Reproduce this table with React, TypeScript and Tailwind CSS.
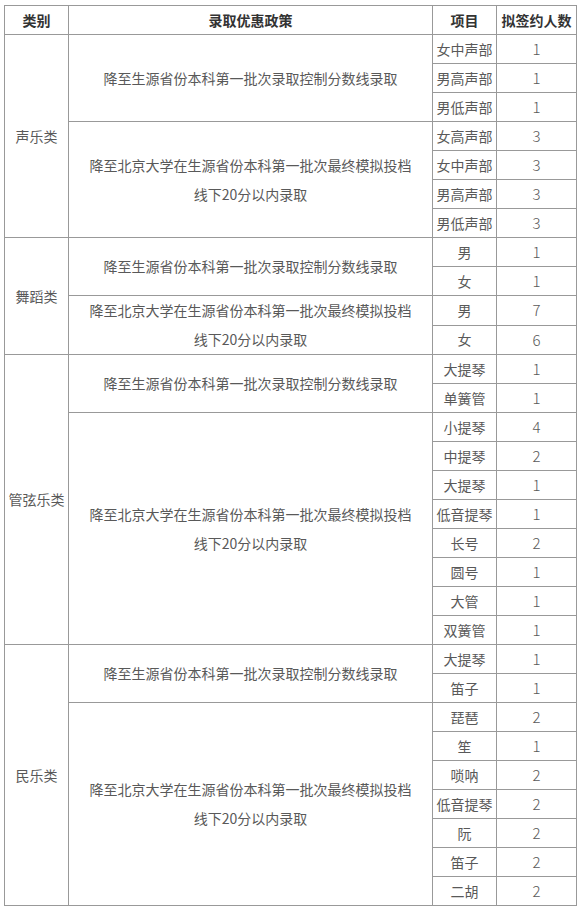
import React from "react";

type Item = [string, string];
type Policy = { text: "A" | "B"; items: Item[] };
type Group = { name: string; policies: Policy[] };

const data: Group[] = [
  {
    name: "声乐类",
    policies: [
      { text: "A", items: [["女中声部", "1"], ["男高声部", "1"], ["男低声部", "1"]] },
      { text: "B", items: [["女高声部", "3"], ["女中声部", "3"], ["男高声部", "3"], ["男低声部", "3"]] },
    ],
  },
  {
    name: "舞蹈类",
    policies: [
      { text: "A", items: [["男", "1"], ["女", "1"]] },
      { text: "B", items: [["男", "7"], ["女", "6"]] },
    ],
  },
  {
    name: "管弦乐类",
    policies: [
      { text: "A", items: [["大提琴", "1"], ["单簧管", "1"]] },
      {
        text: "B",
        items: [
          ["小提琴", "4"],
          ["中提琴", "2"],
          ["大提琴", "1"],
          ["低音提琴", "1"],
          ["长号", "2"],
          ["圆号", "1"],
          ["大管", "1"],
          ["双簧管", "1"],
        ],
      },
    ],
  },
  {
    name: "民乐类",
    policies: [
      { text: "A", items: [["大提琴", "1"], ["笛子", "1"]] },
      {
        text: "B",
        items: [
          ["琵琶", "2"],
          ["笙", "1"],
          ["唢呐", "2"],
          ["低音提琴", "2"],
          ["阮", "2"],
          ["笛子", "2"],
          ["二胡", "2"],
        ],
      },
    ],
  },
];

function PolicyText({ kind }: { kind: "A" | "B" }) {
  if (kind === "A") return <>降至生源省份本科第一批次录取控制分数线录取</>;
  return (
    <>
      降至北京大学在生源省份本科第一批次最终模拟投档
      <br />
      线下20分以内录取
    </>
  );
}

const cell = "border border-[#999999] p-0 text-center align-middle";

export default function App() {
  const rows: React.ReactNode[] = [];
  data.forEach((g, gi) => {
    const total = g.policies.reduce((s, p) => s + p.items.length, 0);
    let first = true;
    g.policies.forEach((p, pi) => {
      p.items.forEach((it, ii) => {
        rows.push(
          <tr key={`${gi}-${pi}-${ii}`} className="h-[29px]">
            {first && (
              <td rowSpan={total} className={cell}>
                {g.name}
              </td>
            )}
            {ii === 0 && (
              <td rowSpan={p.items.length} className={`${cell} leading-[29px]`}>
                <PolicyText kind={p.text} />
              </td>
            )}
            <td className={cell}>{it[0]}</td>
            <td className={`${cell} text-[15px] font-light`}>{it[1]}</td>
          </tr>
        );
        first = false;
      });
    });
  });

  return (
    <div
      className="bg-white w-[584px] h-[913px] pl-[4px] pt-[5px] text-[#595959] text-[14px]"
      style={{ fontFamily: '"Noto Sans CJK SC", "Noto Sans", sans-serif' }}
    >
      <table className="border-collapse table-fixed w-[572px]">
        <colgroup>
          <col className="w-[64px]" />
          <col className="w-[364px]" />
          <col className="w-[64px]" />
          <col className="w-[80px]" />
        </colgroup>
        <thead>
          <tr className="h-[29px]">
            <th className={`${cell} font-bold text-[#333333]`}>类别</th>
            <th className={`${cell} font-bold text-[#333333]`}>录取优惠政策</th>
            <th className={`${cell} font-bold text-[#333333]`}>项目</th>
            <th className={`${cell} font-bold text-[#333333]`}>拟签约人数</th>
          </tr>
        </thead>
        <tbody>{rows}</tbody>
      </table>
    </div>
  );
}
